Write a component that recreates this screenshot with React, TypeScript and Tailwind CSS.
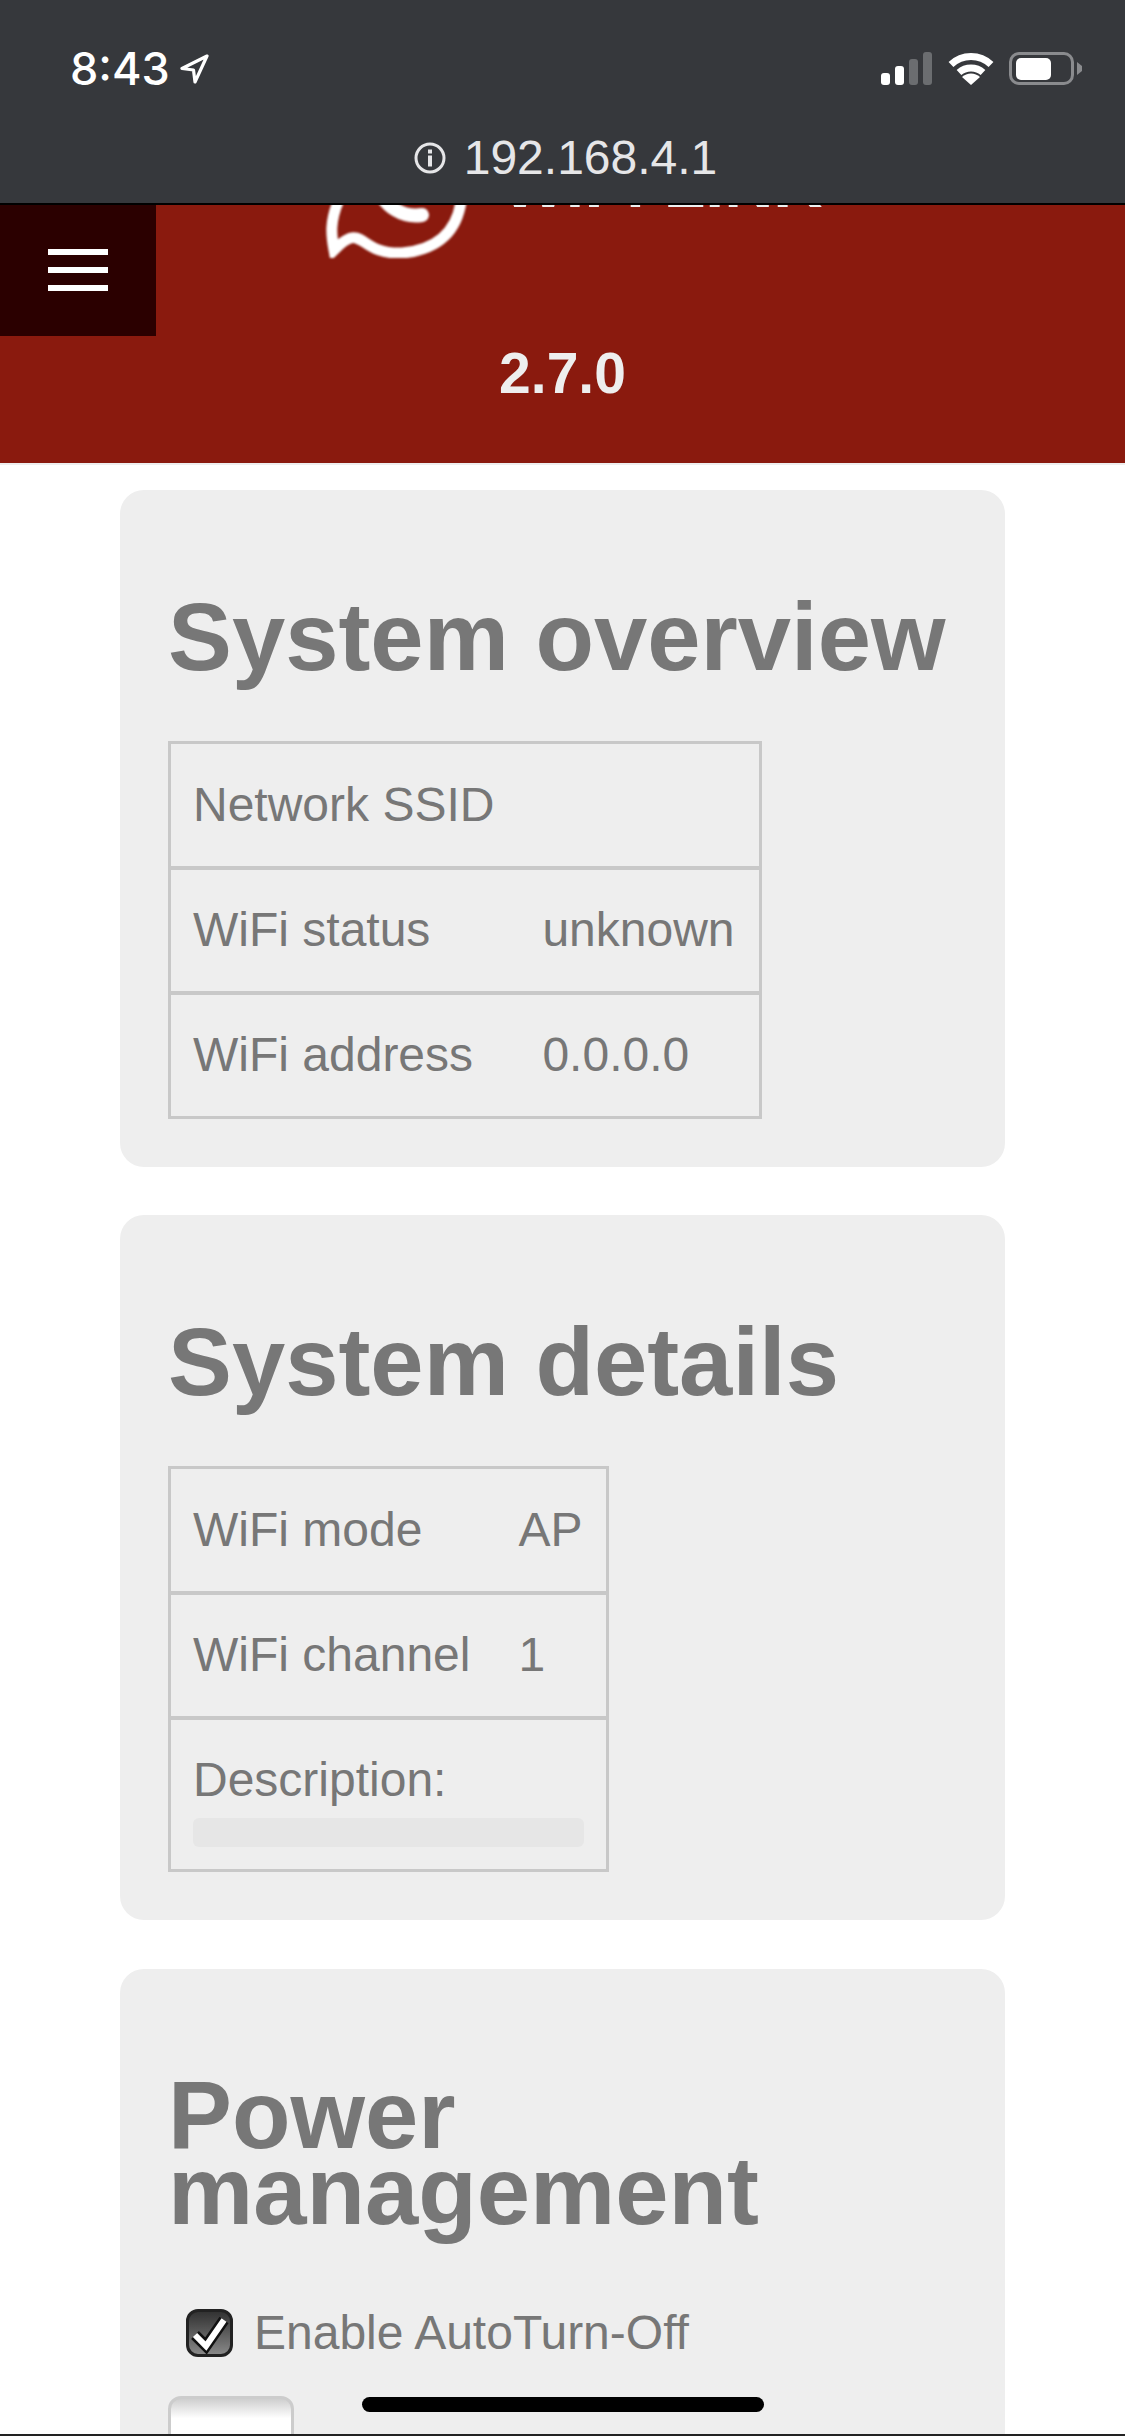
const font = "font-['Liberation_Sans',Arial,sans-serif]";

function Card({ title, children, className }: { title: React.ReactNode; children: React.ReactNode; className: string }) {
  return (
    <section className={`mx-[120px] rounded-[24px] bg-[#eeeeee] px-[48px] ${className}`}>
      <h1 className="text-[95.8px] font-bold leading-[76px] text-[#777777]">{title}</h1>
      {children}
    </section>
  );
}

function Row({ a, b, first }: { a: string; b?: string; first?: boolean }) {
  const top = first ? "border-t-[3px]" : "border-t-[4px]";
  return (
    <tr className="h-[125px]">
      <td className={`border-y-[3px] border-l-[3px] border-[#c8c8c8] ${top} pl-[22px] pr-[24px] whitespace-nowrap`}>{a}</td>
      <td className={`border-y-[3px] border-r-[3px] border-[#c8c8c8] ${top} pl-[24px] pr-[24px] whitespace-nowrap`}>{b}</td>
    </tr>
  );
}

export default function App() {
  return (
    <div className={`relative h-[2436px] w-[1125px] overflow-hidden bg-white ${font} text-[48px] text-[#777777]`}>
      <div className="h-[203px] bg-[#36383c]">
        <div className="flex h-[137px] items-start justify-between pl-[70px] pr-[43px] pt-[52px]">
          <div className="flex items-start">
            <span className="font-['Inter',sans-serif] text-[45px] font-medium leading-[34px] text-white">8:43</span>
            <svg className="ml-[10px] mt-[2px]" width="30" height="30" viewBox="0 0 30 30">
              <path d="M27 2 L2 14.5 L13.5 16 L15 28 Z" fill="none" stroke="#fff" strokeWidth="3.2" strokeLinejoin="round" />
            </svg>
          </div>
          <div className="flex items-start">
            <svg width="52" height="33" viewBox="0 0 52 33">
              <rect x="0" y="21" width="9" height="12" rx="3" fill="#fff" />
              <rect x="14" y="14" width="9" height="19" rx="3" fill="#fff" />
              <rect x="28" y="7" width="9" height="26" rx="3" fill="#6b6d70" />
              <rect x="42" y="0" width="9" height="33" rx="3" fill="#6b6d70" />
            </svg>
            <svg className="ml-[15px]" width="46" height="33" viewBox="0 0 46 33">
              <path d="M3 12.5 A29 29 0 0 1 43 12.5" fill="none" stroke="#fff" strokeWidth="7" />
              <path d="M11 20.5 A18 18 0 0 1 35 20.5" fill="none" stroke="#fff" strokeWidth="7" />
              <path d="M23 33 L14 25 A13 13 0 0 1 32 25 Z" fill="#fff" />
            </svg>
            <div className="ml-[15px] flex h-[33px] w-[65px] items-center rounded-[10px] border-[3px] border-[#8a8b8e] pl-[4px]">
              <div className="h-[22px] w-[35px] rounded-[5px] bg-white" />
            </div>
            <svg className="ml-[3px] mt-[10px]" width="5" height="13" viewBox="0 0 5 13">
              <path d="M0 0 L5 4 L5 9 L0 13 Z" fill="#8a8b8e" />
            </svg>
          </div>
        </div>
        <div className="flex items-start justify-center pl-[6px]">
          <svg className="mt-[5px]" width="32" height="32" viewBox="0 0 32 32">
            <circle cx="16" cy="16" r="14" fill="none" stroke="#e6e6e8" strokeWidth="3" />
            <rect x="14" y="13.5" width="4" height="11" fill="#e6e6e8" />
            <rect x="14" y="7.5" width="4" height="4" fill="#e6e6e8" />
          </svg>
          <span className="ml-[18px] text-[48px] leading-[42px] text-[#e6e6e8]">192.168.4.1</span>
        </div>
      </div>
      <div className="h-[2px] bg-black" />
      <header className="h-[258px] overflow-hidden bg-[#8a1a0e] text-center">
        <div className="-mt-[63px] flex h-[116px] items-end">
          <svg className="ml-[322px] shrink-0 blur-[1px]" width="150" height="116" viewBox="0 0 150 116">
            <path d="M16 60 C 8 80 9 92 12 108 C 20 100 28 94 34 96 C 44 98 50 112 80 111 C 115 108 138 90 140 50" fill="none" stroke="#ffffff" strokeWidth="11" strokeLinecap="round" />
            <path d="M58 50 C 64 64 80 76 100 73" fill="none" stroke="#ffffff" strokeWidth="14" strokeLinecap="round" />
          </svg>
          <div className="ml-[30px] mb-[33px] text-[68px] font-bold leading-[84px] text-[#eeeeee]">WiFi LINK</div>
        </div>
        <div className="mt-[84px] text-[57px] font-bold leading-[62px] text-[#eeeeee]">2.7.0</div>
      </header>
      <div className="h-[2px] bg-[#eeeeee]" />

      <Card title="System overview" className="mt-[25px] h-[677px] pt-[109px]">
        <table className="mt-[66px] border-collapse">
          <tbody>
            <Row a="Network SSID" first />
            <Row a="WiFi status" b="unknown" />
            <Row a="WiFi address" b="0.0.0.0" />
          </tbody>
        </table>
      </Card>

      <Card title="System details" className="mt-[48px] h-[705px] pt-[109px]">
        <table className="mt-[66px] border-collapse">
          <tbody>
            <Row a="WiFi mode" b="AP" first />
            <Row a="WiFi channel" b="1" />
            <tr>
              <td colSpan={2} className="h-[153px] border-[3px] border-t-[4px] border-[#c8c8c8] px-[22px] align-top">
                <div className="pt-[25px] leading-[70px]">Description:</div>
                <div className="mt-[3px] h-[29px] w-full rounded-[6px] bg-[#e6e6e6]" />
              </td>
            </tr>
          </tbody>
        </table>
      </Card>

      <Card title={<>Power<br />management</>} className="mt-[49px] h-[600px] pt-[108px]">
        <label className="ml-[18px] mt-[80px] flex items-center">
          <span className="flex h-[48px] w-[47px] items-center justify-center rounded-[12px] border-[3px] border-[#222222] bg-gradient-to-b from-[#333333] to-[#888888]">
            <svg width="41" height="42" viewBox="0 0 41 42">
              <path d="M6 23 L17 34 L35 8" fill="none" stroke="#111111" strokeWidth="11" strokeLinejoin="miter" />
              <path d="M6 23 L17 34 L35 8" fill="none" stroke="#ffffff" strokeWidth="6" strokeLinejoin="miter" />
            </svg>
          </span>
          <span className="ml-[21px] leading-[48px]">Enable AutoTurn-Off</span>
        </label>
        <div className="mt-[39px] h-[70px] w-[126px] rounded-[13px] border-[3px] border-[#cccccc] bg-[linear-gradient(#cfcfcf,#ffffff_30%)]" />
      </Card>

      <div className="absolute left-0 top-[205px] flex h-[131px] w-[156px] flex-col items-center gap-[12px] bg-[#2b0000] pt-[44px]">
        <div className="h-[6px] w-[60px] bg-white" />
        <div className="h-[6px] w-[60px] bg-white" />
        <div className="h-[6px] w-[60px] bg-white" />
      </div>
      <div className="absolute left-[362px] top-[2397px] h-[15px] w-[402px] rounded-full bg-black" />
      <div className="absolute bottom-0 left-0 h-[2px] w-full bg-[#222222]" />
    </div>
  );
}
